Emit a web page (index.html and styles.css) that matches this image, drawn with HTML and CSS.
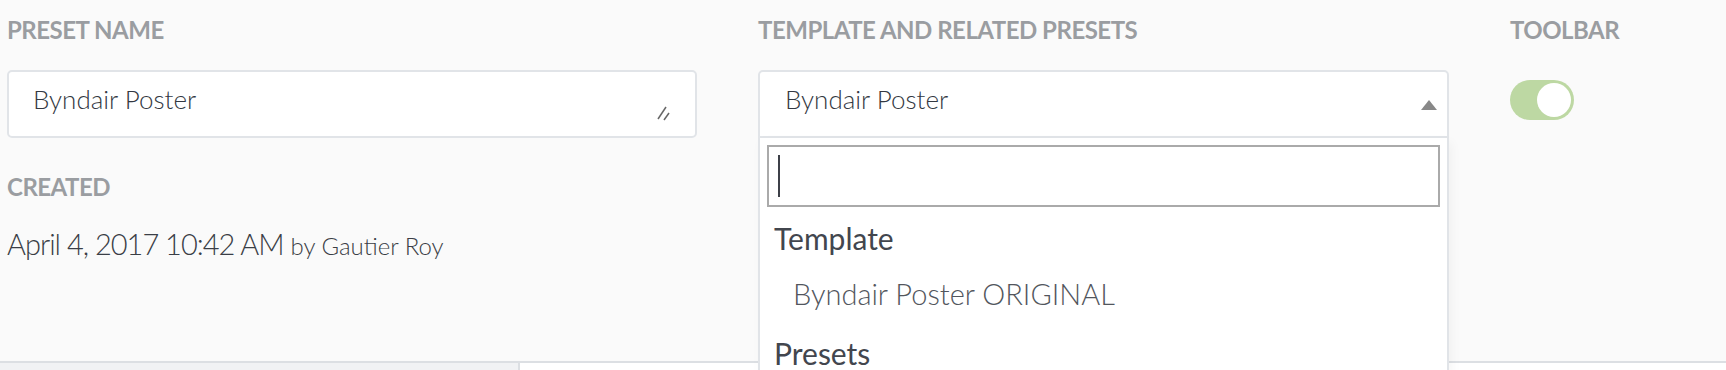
FILE: index.html
```html
<!DOCTYPE html>
<html lang="en">
<head>
<meta charset="utf-8">
<title>Preset</title>
<link rel="stylesheet" href="styles.css">
</head>
<body>
<div class="page">
  <div class="form-row">
    <div class="field">
      <div class="label">PRESET NAME</div>
      <div class="textbox">Byndair Poster
        <svg class="resize" width="14" height="15" viewBox="0 0 14 15"><line x1="10" y1="1" x2="2" y2="13" stroke="#666" stroke-width="1.5"/><line x1="13" y1="7" x2="8" y2="14" stroke="#666" stroke-width="1.5"/></svg>
      </div>
    </div>
    <div class="field">
      <div class="label">TEMPLATE AND RELATED PRESETS</div>
      <div class="select">
        <div class="select-head"><span class="select-value">Byndair Poster</span><span class="caret"></span></div>
        <div class="dropdown">
          <div class="search"><span class="cursor"></span></div>
          <div class="group">Template</div>
          <div class="option">Byndair Poster ORIGINAL</div>
          <div class="group group-last">Presets</div>
        </div>
      </div>
    </div>
    <div class="field">
      <div class="label">TOOLBAR</div>
      <div class="toggle"><span class="knob"></span></div>
    </div>
  </div>
  <div class="created">
    <div class="label">CREATED</div>
    <div class="created-value">April 4, 2017 10:42 AM <span class="by">by Gautier Roy</span></div>
  </div>
  <div class="tabs"><div class="tab"></div><div class="tab-rest"></div></div>
</div>
</body>
</html>
```

FILE: styles.css
```css
html, body {
  margin: 0;
  height: 370px;
  overflow: hidden;
  background: #fafafa;
  font-family: Lato, "Noto Sans", sans-serif;
}
.page {
  height: 370px;
  display: flex;
  flex-direction: column;
  overflow: hidden;
}
.form-row {
  display: grid;
  grid-template-columns: 690px 691px 1fr;
  column-gap: 61px;
  padding: 15px 0 0 7px;
}
.label {
  font-size: 24px;
  font-weight: 700;
  line-height: 30px;
  letter-spacing: -0.5px;
  color: #9a9da1;
}
.field .label {
  margin-bottom: 25px;
}
.textbox {
  position: relative;
  height: 68px;
  box-sizing: border-box;
  border: 2px solid #e1e4e8;
  border-radius: 5px;
  background: #fff;
  padding: 12px 24px 0;
  font-size: 26px;
  font-weight: 300;
  line-height: 30px;
  color: #333842;
}
.resize {
  position: absolute;
  right: 25px;
  bottom: 15px;
}
.select {
  position: relative;
}
.select-head {
  height: 68px;
  box-sizing: border-box;
  border: 2px solid #e1e4e8;
  border-radius: 5px 5px 0 0;
  background: #fff;
  display: flex;
  justify-content: space-between;
  align-items: flex-start;
  padding: 12px 10px 0 25px;
  font-size: 26px;
  font-weight: 300;
  line-height: 30px;
  color: #333842;
}
.caret {
  margin-top: 16px;
  width: 0;
  height: 0;
  border-left: 8.5px solid transparent;
  border-right: 8.5px solid transparent;
  border-bottom: 10px solid #888;
}
.dropdown {
  position: absolute;
  top: 100%;
  left: 0;
  right: 0;
  z-index: 2;
  background: #fff;
  border: 2px solid #e1e4e8;
  border-top: none;
  padding: 7px 7px 0;
  box-shadow: 3px 4px 10px rgba(0, 0, 0, 0.04);
}
.search {
  height: 62px;
  box-sizing: border-box;
  border: 2px solid #aaa;
  display: flex;
  align-items: center;
  padding-left: 9px;
}
.cursor {
  width: 2px;
  height: 42px;
  background: #3d4048;
}
.group {
  font-size: 30px;
  font-weight: 400;
  line-height: 36px;
  padding: 13px 7px 10px;
  color: #42464e;
}
.group-last {
  padding-bottom: 0;
}
.option {
  font-size: 29px;
  font-weight: 300;
  line-height: 36px;
  padding: 10px 7px 10px 26px;
  color: #52565d;
}
.toggle {
  width: 64px;
  height: 40px;
  border-radius: 20px;
  background: #bdd8a3;
  margin-top: 35px;
  position: relative;
}
.knob {
  position: absolute;
  right: 3px;
  top: 3px;
  width: 34px;
  height: 34px;
  border-radius: 50%;
  background: #fff;
}
.created {
  padding: 34px 0 0 7px;
}
.created-value {
  margin-top: 25px;
  font-size: 29px;
  font-weight: 300;
  line-height: 34px;
  letter-spacing: -1px;
  color: #3a3e46;
}
.by {
  font-size: 24px;
  letter-spacing: 0;
}
.tabs {
  margin-top: auto;
  flex: 0 0 7px;
  border-top: 2px solid #dcdfe3;
  display: flex;
}
.tab {
  width: 518px;
  background: #f1f2f4;
  border-right: 2px solid #dcdfe3;
}
.tab-rest {
  flex: 1;
  background: #fff;
}
```
